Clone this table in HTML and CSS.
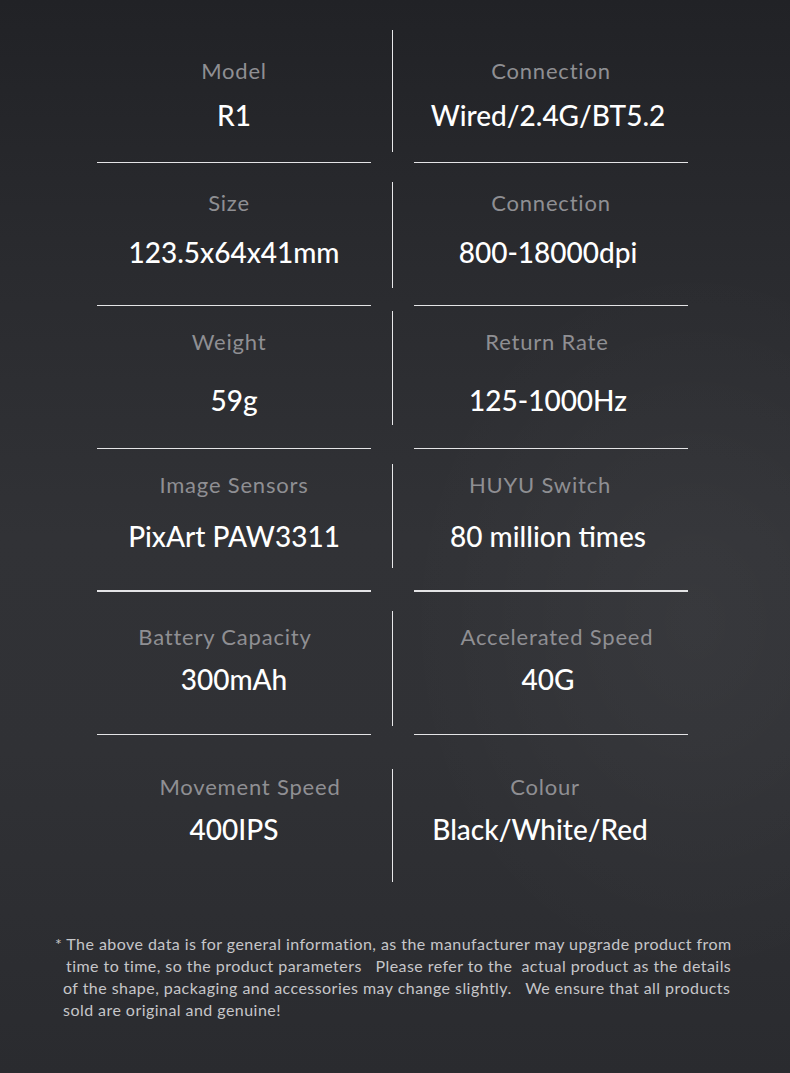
FILE: index.html
```html
<!DOCTYPE html>
<html lang="en">
<head>
<meta charset="utf-8">
<title>R1 Specifications</title>
<link rel="stylesheet" href="styles.css">
</head>
<body>
<main class="sheet">
  <section class="specs">
    <div class="row r1">
      <div class="cell"><span class="label">Model</span><span class="value">R1</span></div>
      <div class="divider"></div>
      <div class="cell right"><span class="label">Connection</span><span class="value">Wired/2.4G/BT5.2</span></div>
    </div>
    <div class="rule"><span></span><span></span></div>
    <div class="row r2">
      <div class="cell"><span class="label nudge-5">Size</span><span class="value">123.5x64x41mm</span></div>
      <div class="divider"></div>
      <div class="cell right"><span class="label">Connection</span><span class="value">800-18000dpi</span></div>
    </div>
    <div class="rule"><span></span><span></span></div>
    <div class="row r3">
      <div class="cell"><span class="label nudge-5">Weight</span><span class="value">59g</span></div>
      <div class="divider"></div>
      <div class="cell right"><span class="label nudge-4">Return Rate</span><span class="value">125-1000Hz</span></div>
    </div>
    <div class="rule"><span></span><span></span></div>
    <div class="row r4">
      <div class="cell"><span class="label">Image Sensors</span><span class="value">PixArt PAW3311</span></div>
      <div class="divider"></div>
      <div class="cell right"><span class="label nudge-11">HUYU Switch</span><span class="value">80 million times</span></div>
    </div>
    <div class="rule thick"><span></span><span></span></div>
    <div class="row r5">
      <div class="cell"><span class="label nudge-9">Battery Capacity</span><span class="value">300mAh</span></div>
      <div class="divider"></div>
      <div class="cell right"><span class="label nudge-p6">Accelerated Speed</span><span class="value">40G</span></div>
    </div>
    <div class="rule"><span></span><span></span></div>
    <div class="row r6">
      <div class="cell"><span class="label nudge-p16">Movement Speed</span><span class="value">400IPS</span></div>
      <div class="divider"></div>
      <div class="cell right"><span class="label nudge-6">Colour</span><span class="value nudge-8">Black/White/Red</span></div>
    </div>
  </section>
  <p class="note">
    <span class="l1">* The above data is for general information, as the manufacturer may upgrade product from</span>
    <span class="l2">time to time, so the product parameters &nbsp; Please refer to the &nbsp;actual product as the details</span>
    <span class="l3">of the shape, packaging and accessories may change slightly. &nbsp; We ensure that all products</span>
    <span class="l3">sold are original and genuine!</span>
  </p>
</main>
</body>
</html>
```

FILE: styles.css
```css
* { box-sizing: border-box; }

html, body {
  margin: 0;
  padding: 0;
}

body {
  width: 790px;
  height: 1073px;
  overflow: hidden;
  font-family: "Lato", "Liberation Sans", sans-serif;
  background:
    radial-gradient(ellipse 420px 520px at 88% 58%, rgba(255,255,255,0.035), rgba(255,255,255,0) 70%),
    linear-gradient(180deg, #212226 0%, #2a2b2f 25%, #313236 50%, #303135 70%, #2a2b2f 100%);
}

.sheet {
  width: 790px;
  height: 1073px;
  display: flex;
  flex-direction: column;
}

.specs {
  display: flex;
  flex-direction: column;
  padding-left: 97px;
}

.row {
  display: grid;
  grid-template-columns: 274px 43px 274px;
  height: var(--h);
}

.cell {
  display: flex;
  flex-direction: column;
  align-items: center;
  padding-top: var(--lt);
}

.cell.right .value { transform: translateX(-3px); }

.label {
  font-size: 22px;
  line-height: 30px;
  letter-spacing: 0.8px;
  color: #8f8f93;
  white-space: nowrap;
}

.value {
  margin-top: var(--gap);
  font-size: 28px;
  line-height: 36px;
  font-weight: 500;
  color: #ffffff;
  white-space: nowrap;
}

.nudge-4 { transform: translateX(-4px); }
.nudge-5 { transform: translateX(-5px); }
.nudge-6 { transform: translateX(-6px); }
.nudge-9 { transform: translateX(-9px); }
.nudge-11 { transform: translateX(-11px); }
.nudge-p6 { transform: translateX(6px); }
.nudge-p16 { transform: translateX(16px); }
.cell.right .value.nudge-8 { transform: translateX(-11px); }

.divider {
  justify-self: center;
  width: 1px;
  margin-top: var(--dt);
  height: var(--dh);
  background: #e8e8ea;
}

.rule {
  display: grid;
  grid-template-columns: 274px 274px;
  column-gap: 43px;
  height: 1px;
}

.rule span { background: #e4e4e6; height: 1px; }
.rule.thick { height: 2px; }
.rule.thick span { height: 2px; }

.r1 { --h: 162px; --dt: 30px; --dh: 122px; --lt: 56px; --gap: 11px; }
.r2 { --h: 142px; --dt: 19px; --dh: 106px; --lt: 25px; --gap: 16px; }
.r3 { --h: 142px; --dt: 5px;  --dh: 114px; --lt: 21px; --gap: 25px; }
.r4 { --h: 141px; --dt: 15px; --dh: 104px; --lt: 21px; --gap: 18px; }
.r5 { --h: 142px; --dt: 19px; --dh: 115px; --lt: 30px; --gap: 9px; }
.r6 { --h: 170px; --dt: 34px; --dh: 113px; --lt: 37px; --gap: 9px; }

.note {
  margin: 28px 0 0 0;
  display: flex;
  flex-direction: column;
  font-size: 16px;
  line-height: 22px;
  letter-spacing: 0.45px;
  color: #c6c6c9;
}

.note span { white-space: pre; }
.note .l1 { padding-left: 55px; }
.note .l2 { padding-left: 66px; }
.note .l3 { padding-left: 63px; }
```
